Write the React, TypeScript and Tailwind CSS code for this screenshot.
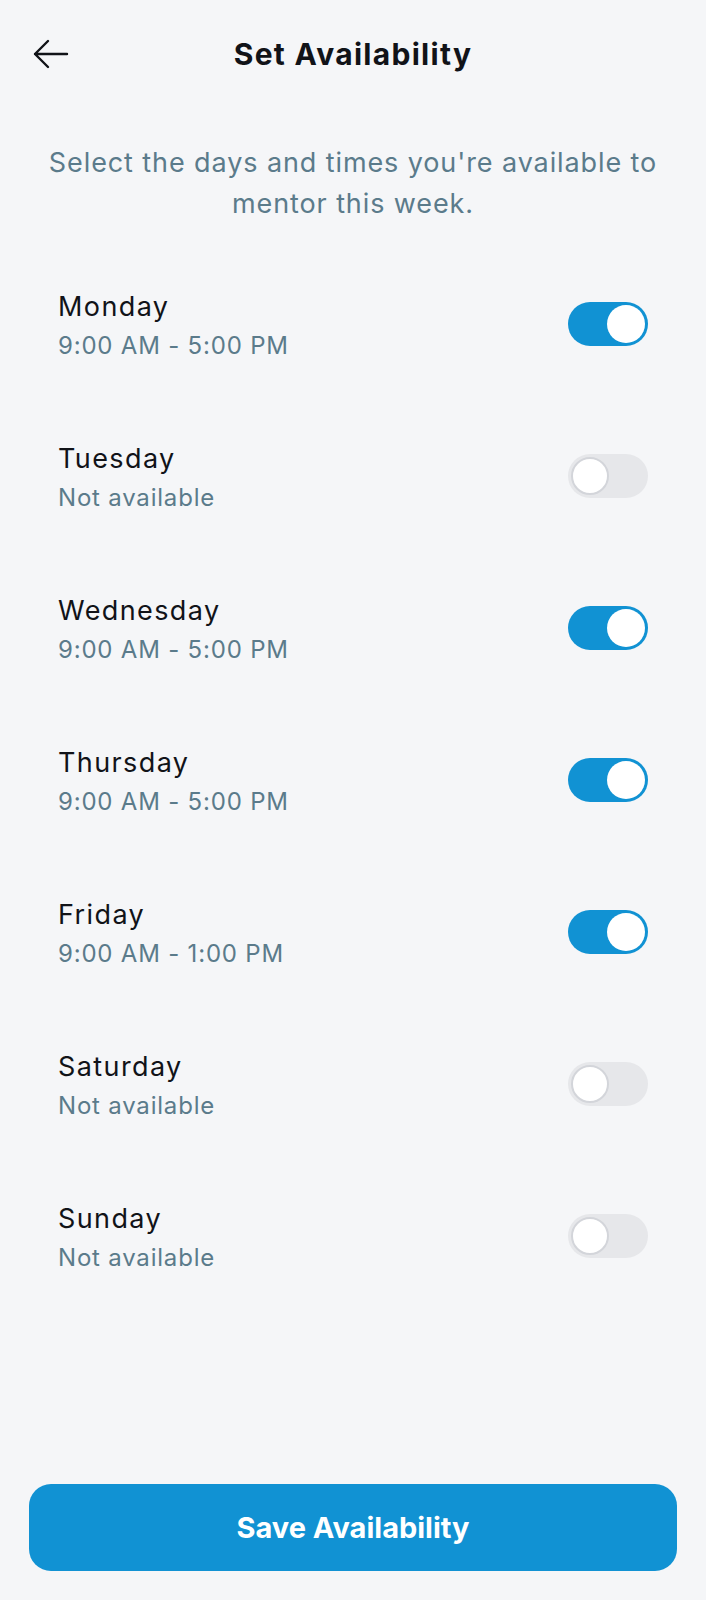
import React from "react";

type Day = { name: string; time: string; on: boolean };

const days: Day[] = [
  { name: "Monday", time: "9:00 AM - 5:00 PM", on: true },
  { name: "Tuesday", time: "Not available", on: false },
  { name: "Wednesday", time: "9:00 AM - 5:00 PM", on: true },
  { name: "Thursday", time: "9:00 AM - 5:00 PM", on: true },
  { name: "Friday", time: "9:00 AM - 1:00 PM", on: true },
  { name: "Saturday", time: "Not available", on: false },
  { name: "Sunday", time: "Not available", on: false },
];

function Toggle({ on }: { on: boolean }) {
  return on ? (
    <div className="mb-[4px] flex h-[44px] w-[80px] shrink-0 items-center justify-end rounded-full bg-[#1192d3] px-[3px]">
      <div className="h-[38px] w-[38px] rounded-full bg-white" />
    </div>
  ) : (
    <div className="mb-[4px] flex h-[44px] w-[80px] shrink-0 items-center justify-start rounded-full bg-[#e6e7ea] px-[3px]">
      <div className="h-[38px] w-[38px] rounded-full border-2 border-[#d3d5da] bg-white" />
    </div>
  );
}

export default function App() {
  return (
    <div className="flex min-h-[1600px] w-[706px] flex-col bg-[#f5f6f8] font-['Inter','Noto_Sans',sans-serif] text-[#111318]">
      <header className="flex h-[108px] items-center justify-between px-[33px]">
        <button className="flex h-[30px] w-[36px] items-center">
          <svg width="36" height="30" viewBox="0 0 36 30" fill="none" stroke="#111318" strokeWidth="2.4" strokeLinecap="round" strokeLinejoin="round">
            <path d="M2 15 H34 M15 2 L2 15 L15 28" />
          </svg>
        </button>
        <h1 className="text-[30px] font-bold tracking-[1.3px]">Set Availability</h1>
        <div className="w-[36px]" />
      </header>

      <p className="mt-[34px] px-[36px] text-center text-[27px] leading-[41px] tracking-[0.9px] text-[#5b7b8b]">
        Select the days and times you're available to mentor this week.
      </p>

      <div className="mt-[63px] flex flex-col gap-[74px] px-[58px]">
        {days.map((d) => (
          <div key={d.name} className="flex items-center justify-between">
            <div className="flex flex-col">
              <span className="text-[27px] leading-[40px] tracking-[1.4px]">{d.name}</span>
              <span className="text-[24px] leading-[38px] tracking-[0.8px] text-[#5b7b8b]">{d.time}</span>
            </div>
            <Toggle on={d.on} />
          </div>
        ))}
      </div>

      <div className="flex-1" />

      <div className="px-[29px] pb-[29px]">
        <button className="flex h-[87px] w-full items-center justify-center rounded-[22px] bg-[#1192d3] text-[29px] font-bold text-white">
          Save Availability
        </button>
      </div>
    </div>
  );
}
